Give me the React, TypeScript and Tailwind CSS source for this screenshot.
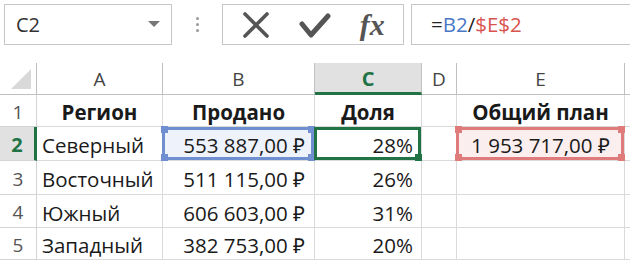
import React from 'react';

const font = { fontFamily: '"Open Sans", "Liberation Sans", sans-serif' };

type Row = { n: number; a: string; b: string; c: string };

const rows: Row[] = [
  { n: 3, a: 'Восточный', b: '511 115,00 ₽', c: '26%' },
  { n: 4, a: 'Южный', b: '606 603,00 ₽', c: '31%' },
  { n: 5, a: 'Западный', b: '382 753,00 ₽', c: '20%' },
];

const Handles: React.FC<{ color: string; all?: boolean }> = ({ color, all = true }) => (
  <>
    {all && <span className={`absolute -left-[4px] -top-[4px] w-[7px] h-[7px] ${color}`} />}
    {all && <span className={`absolute -right-[4px] -top-[4px] w-[7px] h-[7px] ${color}`} />}
    {all && <span className={`absolute -left-[4px] -bottom-[4px] w-[7px] h-[7px] ${color}`} />}
    <span className={`absolute -right-[4px] -bottom-[4px] w-[7px] h-[7px] ${color}`} />
  </>
);

const App: React.FC = () => {
  const cell = 'border-r border-b border-[#dadada] flex items-center pt-[4px] text-[20.5px] text-[#1a1a1a]';
  const rowHead = 'border-r border-b border-[#d4d4d4] flex items-center justify-center pt-[3px] text-[19px] text-[#555]';
  const colHead = 'border-r border-b border-[#bfbfbf] flex items-center justify-center pt-[2px] text-[19px] text-[#444]';
  return (
    <div className="w-[630px] h-[260px] bg-white overflow-hidden" style={font}>
      {/* formula bar */}
      <div className="flex items-start h-[63px] pt-[4px] pl-[4px]">
        <div className="w-[168px] h-[41px] border border-[#c6c6c6] flex items-center justify-between pl-[11px] pr-[11px]">
          <span className="text-[20px] text-[#333]">C2</span>
          <svg width="12" height="7" viewBox="0 0 12 7"><path d="M0 0h12L6 6z" fill="#777" /></svg>
        </div>
        <div className="w-[50px] h-[41px] flex flex-col items-center justify-center gap-[3px]">
          <span className="w-[3px] h-[3px] rounded-full bg-[#999]" />
          <span className="w-[3px] h-[3px] rounded-full bg-[#999]" />
          <span className="w-[3px] h-[3px] rounded-full bg-[#999]" />
        </div>
        <div className="w-[182px] h-[41px] border border-[#c6c6c6] flex items-center justify-around px-[4px]">
          <svg width="30" height="30" viewBox="0 0 30 30">
            <path d="M4 4L26 26M26 4L4 26" stroke="#555" strokeWidth="3.6" strokeLinecap="round" />
          </svg>
          <svg width="32" height="30" viewBox="0 0 32 30">
            <path d="M3 14L12 25L29 6" stroke="#555" strokeWidth="5" fill="none" strokeLinecap="round" strokeLinejoin="round" />
          </svg>
          <span className="text-[30px] italic font-bold text-[#555] leading-none" style={{ fontFamily: '"Liberation Serif", serif' }}>fx</span>
        </div>
        <div className="w-[7px]" />
        <div className="flex-1 h-[41px] border border-r-0 border-[#c6c6c6] flex items-center pl-[19px] text-[20.5px]">
          <span className="text-[#222]">=</span>
          <span className="text-[#4a78c7]">B2</span>
          <span className="text-[#222]">/</span>
          <span className="text-[#d9534f]">$E$2</span>
        </div>
      </div>

      {/* grid */}
      <div className="grid grid-cols-[37px_126px_152px_107px_35px_168px_5px] grid-rows-[32px_32px_34px_34px_33px_32px]">
        {/* column headers */}
        <div className="border-r border-b border-[#bfbfbf] relative">
          <svg className="absolute right-[5px] bottom-[5px]" width="20" height="20" viewBox="0 0 20 20"><path d="M20 0V20H0z" fill="#d9d9d9" /></svg>
        </div>
        <div className={colHead}>A</div>
        <div className={colHead}>B</div>
        <div className="border-r border-b-[3px] border-b-[#217346] border-r-[#bfbfbf] bg-[#e1e1e1] flex items-center justify-center pt-[3px] text-[20px] font-bold text-[#217346]">C</div>
        <div className={colHead}>D</div>
        <div className={colHead}>E</div>
        <div className="border-b border-[#bfbfbf]" />

        {/* row 1 */}
        <div className={rowHead}>1</div>
        <div className={`${cell} justify-center font-bold`}>Регион</div>
        <div className={`${cell} justify-center font-bold`}>Продано</div>
        <div className={`${cell} justify-center font-bold`}>Доля</div>
        <div className={cell} />
        <div className={`${cell} justify-center font-bold`}>Общий план</div>
        <div className="border-b border-[#dadada]" />

        {/* row 2 */}
        <div className="border-r-[3px] border-r-[#217346] border-b border-b-[#d4d4d4] bg-[#e1e1e1] flex items-center justify-center pt-[3px] text-[20px] font-bold text-[#217346]">2</div>
        <div className={`${cell} pl-[5px]`}>Северный</div>
        <div className={`${cell} relative justify-end pr-[9px] bg-[#eef2fa]`}>
          <div className="absolute inset-0 -left-[1px] border-[3px] border-[#6f8fd0]">
            <Handles color="bg-[#6f8fd0]" />
          </div>
          <span className="relative">553 887,00 ₽</span>
        </div>
        <div className={`${cell} relative justify-end pr-[8px]`}>
          <div className="absolute inset-0 -left-[1px] border-[3px] border-[#217346]">
            <Handles color="bg-[#217346]" all={false} />
          </div>
          <span className="relative">28%</span>
        </div>
        <div className={cell} />
        <div className={`${cell} relative justify-center bg-[#fbeeee]`}>
          <div className="absolute inset-0 -left-[1px] border-[3px] border-[#e07b7b]">
            <Handles color="bg-[#e07b7b]" />
          </div>
          <span className="relative">1 953 717,00 ₽</span>
        </div>
        <div className="border-b border-[#dadada]" />

        {rows.map((r) => (
          <React.Fragment key={r.n}>
            <div className={rowHead}>{r.n}</div>
            <div className={`${cell} pl-[5px]`}>{r.a}</div>
            <div className={`${cell} justify-end pr-[9px]`}>{r.b}</div>
            <div className={`${cell} justify-end pr-[8px]`}>{r.c}</div>
            <div className={cell} />
            <div className={cell} />
            <div className="border-b border-[#dadada]" />
          </React.Fragment>
        ))}
      </div>
    </div>
  );
};

export default App;
